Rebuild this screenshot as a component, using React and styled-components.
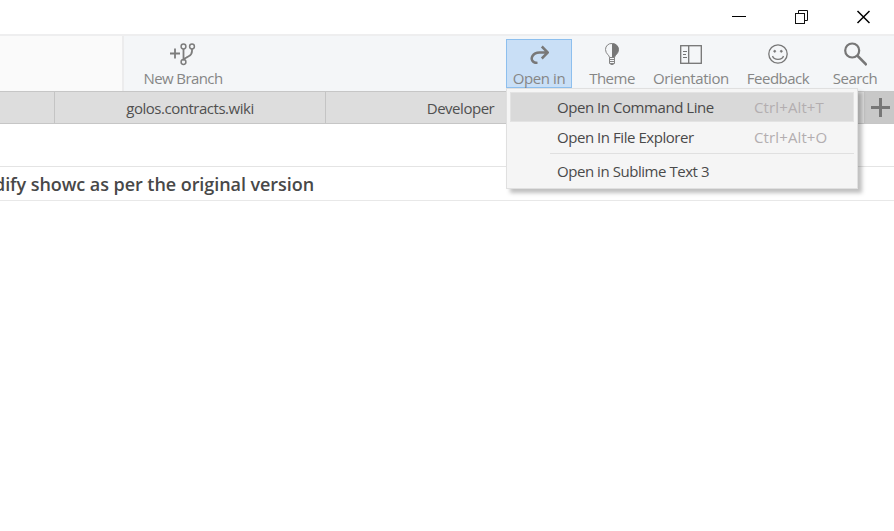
import React from 'react';
import styled, { createGlobalStyle } from 'styled-components';

const Global = createGlobalStyle`
  * { box-sizing: border-box; }
  body { margin: 0; overflow: hidden; background: #fff; font-family: 'Open Sans', 'Noto Sans', sans-serif; }
  svg { display: block; }
`;

const Window = styled.div`
  width: 894px;
  height: 531px;
  overflow: hidden;
  background: #fff;
  display: flex;
  flex-direction: column;
`;

const TitleBar = styled.header`
  height: 34px;
  flex: none;
  display: flex;
  justify-content: flex-end;
`;

const WindowButton = styled.div`
  width: 62px;
  height: 34px;
  display: grid;
  place-items: center;
`;

const Toolbar = styled.div`
  height: 57px;
  flex: none;
  display: flex;
  background: #f4f6f8;
  border-top: 2px solid #eeeeef;
`;

const RepoPane = styled.div`
  width: 124px;
  background: #fafafa;
  border-right: 2px solid #ececed;
`;

const Actions = styled.div`
  flex: 1;
  display: flex;
  padding-top: 3px;
`;

const Spacer = styled.div`
  flex: 1;
`;

const ToolButton = styled.div`
  width: ${p => p.$width}px;
  height: 49px;
  margin-left: ${p => p.$gap || 0}px;
  display: flex;
  flex-direction: column;
  align-items: center;
  background: ${p => (p.$active ? '#c9dff6' : 'transparent')};
  border: 1px solid ${p => (p.$active ? '#8dbfee' : 'transparent')};
`;

const IconSlot = styled.div`
  height: 28px;
  flex: none;
  display: grid;
  place-items: center;
`;

const Label = styled.span`
  font-size: 15px;
  line-height: 20px;
  letter-spacing: ${p => p.$track ?? -0.5}px;
  white-space: nowrap;
  color: #868686;
`;

const TabBar = styled.nav`
  height: 33px;
  flex: none;
  display: flex;
  background: #ddd;
  border-top: 1px solid #c6c6c6;
  border-bottom: 1px solid #c6c6c6;
`;

const Tab = styled.div`
  width: ${p => p.$width}px;
  flex: none;
  border-right: 1px solid #c4c4c4;
  text-align: center;
  font-size: 15px;
  line-height: 33px;
  letter-spacing: -0.47px;
  color: #505050;
`;

const AddTab = styled.div`
  flex: 1;
  padding-left: 2px;
  background: #c8c8c8;
  display: grid;
  place-items: center;
`;

const FilterRow = styled.div`
  height: 43px;
  flex: none;
  border-bottom: 1px solid #e4e4e4;
`;

const CommitTitle = styled.h1`
  height: 34px;
  flex: none;
  margin: 0 0 0 -6px;
  border-bottom: 1px solid #e8e8e8;
  font-size: 18px;
  line-height: 34px;
  font-weight: 600;
  letter-spacing: -0.06px;
  white-space: nowrap;
  color: #484848;
`;

const Menu = styled.div`
  position: absolute;
  left: 506px;
  top: 88px;
  width: 352px;
  height: 101px;
  padding: 3px;
  background: #f5f5f5;
  border: 1px solid #e0e0e0;
  box-shadow: 4px 4px 4px rgba(0, 0, 0, 0.25);
`;

const MenuItem = styled.div`
  height: 30px;
  display: grid;
  grid-template-columns: 197px 1fr;
  align-items: center;
  padding-left: 46px;
  font-size: 15px;
  color: #4a4a4a;
  white-space: nowrap;
  background: ${p => (p.$active ? '#d9d9d9' : 'transparent')};
  border: 1px solid ${p => (p.$active ? '#e3e3e3' : 'transparent')};
`;

const ItemText = styled.span`
  letter-spacing: -0.45px;
`;

const Shortcut = styled.span`
  letter-spacing: 0.12px;
  color: #b3aeb0;
`;

const MenuRule = styled.div`
  height: 1px;
  margin: 1px 0 2px 40px;
  background: #e0e0e0;
`;

const MinimizeIcon = () => (
  <svg width="14" height="14" viewBox="0 0 14 14"><path d="M0 6.5H14" stroke="#000" /></svg>
);
const RestoreIcon = () => (
  <svg width="14" height="14" viewBox="0 0 14 14" fill="none" stroke="#111">
    <rect x="1.5" y="3.5" width="9" height="10" /><path d="M4.5 3V.5h9v10H11" />
  </svg>
);
const CloseIcon = () => (
  <svg width="14" height="14" viewBox="0 0 14 14"><path d="M1.500 1l12 12M13.500 1L1.500 13" stroke="#000" strokeWidth="1.5" /></svg>
);
const BranchIcon = () => (
  <svg width="26" height="24" viewBox="0 0 26 24" fill="none" stroke="#7d7d7d" strokeWidth="1.8">
    <path d="M0 11.5h10M5 6.5v10M13.5 7v10.500M22 7v2c0 5-3 4.500-5.500 6.500-1.500 1-3 1.500-3 3" />
    <circle cx="13.5" cy="4.5" r="2.4" strokeWidth="1.5" />
    <circle cx="22" cy="4.5" r="2.4" strokeWidth="1.5" />
    <circle cx="13.5" cy="20" r="2.4" strokeWidth="1.5" />
  </svg>
);
const OpenIcon = () => (
  <svg width="20" height="20" viewBox="-0.5 -0.5 20 20" fill="none" stroke="#787878" strokeWidth="2.5">
    <path d="M8 18.600C2.500 18.500 1.200 14.500 3 11.500 4.500 9 7 8 10 8h7.500M12.300 2l6 6-6 6" />
  </svg>
);
const BulbIcon = () => (
  <svg width="14" height="22" viewBox="0 0 14 22" fill="none" stroke="#858585">
    <path d="M4.500 14.500c0-2.500-4-3.500-4-8a6 6 0 0 1 6.500-6" />
    <path d="M7.500 .5a6 6 0 0 1 6 6c0 4.500-4 5.500-4 8h-2z" fill="#777" stroke="#777" />
    <path d="M4.500 14.500v6h5v-6zM4.500 16.500h5M4.500 18.500h5M5.500 21.500h3" />
  </svg>
);
const OrientationIcon = () => (
  <svg width="22" height="19" viewBox="0 0 22 19" fill="none" stroke="#747474" strokeWidth="1.3">
    <rect x=".7" y=".7" width="20.600" height="17.600" /><path d="M8.700 1v17" />
    <path d="M3 6.500h4M3 9.500h3M3 12.500h4" strokeWidth="1" />
  </svg>
);
const SmileIcon = () => (
  <svg width="20" height="20" viewBox="0 0 20 20" fill="none" stroke="#777" strokeWidth="1.3">
    <circle cx="10" cy="10" r="9.200" /><path d="M4.500 12c1.500 4.500 9.500 4.500 11 0" />
    <circle cx="6.700" cy="7.300" r="1" fill="#777" strokeWidth=".7" />
    <circle cx="13.300" cy="7.300" r="1" fill="#777" strokeWidth=".7" />
  </svg>
);
const SearchIcon = () => (
  <svg width="24" height="24" viewBox="-0.7 0 24 24" fill="none" stroke="#777">
    <circle cx="8.500" cy="8.500" r="7" strokeWidth="2.200" /><path d="M13.500 13.500l9.500 9.500" strokeWidth="2.500" />
  </svg>
);
const PlusIcon = () => (
  <svg width="19" height="19" viewBox="0 0 19 19"><path d="M0 9.500h19M9.500 0v19" stroke="#777" strokeWidth="3" /></svg>
);

export default function App() {
  return (
    <Window>
      <Global />
      <TitleBar>
        <WindowButton><MinimizeIcon /></WindowButton>
        <WindowButton><RestoreIcon /></WindowButton>
        <WindowButton><CloseIcon /></WindowButton>
      </TitleBar>
      <Toolbar>
        <RepoPane />
        <Actions>
          <ToolButton $width={84} $gap={17}><IconSlot><BranchIcon /></IconSlot><Label $track={-0.6}>New Branch</Label></ToolButton>
          <Spacer />
          <ToolButton $width={66} $active><IconSlot><OpenIcon /></IconSlot><Label $track={-0.4}>Open in</Label></ToolButton>
          <ToolButton $width={50} $gap={15}><IconSlot><BulbIcon /></IconSlot><Label>Theme</Label></ToolButton>
          <ToolButton $width={82} $gap={13}><IconSlot><OrientationIcon /></IconSlot><Label $track={-0.4}>Orientation</Label></ToolButton>
          <ToolButton $width={70} $gap={11}><IconSlot><SmileIcon /></IconSlot><Label>Feedback</Label></ToolButton>
          <ToolButton $width={64} $gap={10}><IconSlot><SearchIcon /></IconSlot><Label>Search</Label></ToolButton>
          <ToolButton $width={7} />
        </Actions>
      </Toolbar>
      <TabBar>
        <Tab $width={55} />
        <Tab $width={271}>golos.contracts.wiki</Tab>
        <Tab $width={270}>Developer</Tab>
        <Tab $width={269} />
        <AddTab><PlusIcon /></AddTab>
      </TabBar>
      <FilterRow />
      <CommitTitle>dify showc as per the original version</CommitTitle>
      <Menu>
        <MenuItem $active><ItemText>Open In Command Line</ItemText><Shortcut>Ctrl+Alt+T</Shortcut></MenuItem>
        <MenuItem><ItemText>Open In File Explorer</ItemText><Shortcut>Ctrl+Alt+O</Shortcut></MenuItem>
        <MenuRule />
        <MenuItem><ItemText>Open in Sublime Text 3</ItemText></MenuItem>
      </Menu>
    </Window>
  );
}
